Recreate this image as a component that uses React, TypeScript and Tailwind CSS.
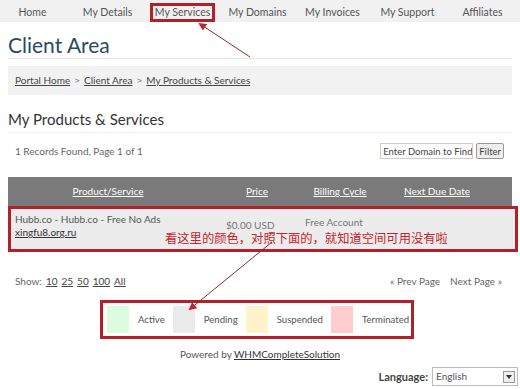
import React from 'react';

const navItems = ['Home', 'My Details', 'My Services', 'My Domains', 'My Invoices', 'My Support', 'Affiliates'];

const legend = [
  { label: 'Active', color: 'bg-[#ddfcdd]' },
  { label: 'Pending', color: 'bg-[#ebebeb]' },
  { label: 'Suspended', color: 'bg-[#fff3cc]' },
  { label: 'Terminated', color: 'bg-[#ffcccf]' },
];

const App: React.FC = () => {
  return (
    <div className="relative w-[520px] h-[389px] overflow-hidden bg-white text-[#555] font-['Lato','Noto_Sans',sans-serif] text-[10px] leading-[15px]">
      {/* top nav */}
      <div className="h-[22px] bg-[#f1f1f1] flex items-end ml-[-5px]">
        {navItems.map((item) => (
          <div key={item} className="w-[76px] flex justify-center text-[10.5px] text-[#555]">
            {item === 'My Services' ? (
              <span className="border-[3px] border-[#b3202a] px-[2px] h-[19px] leading-[13px]">{item}</span>
            ) : (
              <span className="h-[19px] leading-[13px] pt-[3px]">{item}</span>
            )}
          </div>
        ))}
      </div>

      <div className="px-[8px]">
        <h1 className="text-[21px] text-[#2b4a60] leading-[26px] mt-[10px]">Client Area</h1>
        <div className="h-px bg-[#e6e6e6]" />

        <div className="mt-[7px] h-[29px] bg-[#f2f2f2] flex items-center px-[7px] text-[#444] gap-[4px]">
          <span className="underline">Portal Home</span>
          <span className="text-[#777]">&gt;</span>
          <span className="underline">Client Area</span>
          <span className="text-[#777]">&gt;</span>
          <span className="underline">My Products &amp; Services</span>
        </div>

        <h2 className="text-[15px] text-[#333] mt-[14px] leading-[20px]">My Products &amp; Services</h2>
        <div className="h-px bg-[#f2f2f2] mt-[3px]" />

        <div className="flex items-center justify-between mt-[10px] h-[16px] pl-[7px] pr-[8px]">
          <span className="text-[#666]">1 Records Found, Page 1 of 1</span>
          <div className="flex items-center gap-[3px]">
            <div className="w-[93px] h-[16px] border border-[#ccc] text-[#444] text-[9.5px] whitespace-nowrap overflow-hidden flex items-center px-[2px]">Enter Domain to Find</div>
            <div className="h-[16px] border border-[#999] bg-[#eee] text-[#444] text-[9.5px] flex items-center px-[2px] rounded-[2px]">Filter</div>
          </div>
        </div>

        {/* table */}
        <div className="mt-[18px] h-[29px] bg-[#7a7a7a] flex items-center text-white">
          <div className="w-[200px] text-center underline">Product/Service</div>
          <div className="w-[98px] text-center underline">Price</div>
          <div className="w-[68px] text-center underline">Billing Cycle</div>
          <div className="w-[126px] text-center underline">Next Due Date</div>
        </div>
        <div className="relative h-[46px] bg-[#ececec] border-[3px] border-[#b3202a] mr-[-6px] flex">
          <div className="w-[215px] pl-[4px] pt-[4px] leading-[13px] text-[#555]">
            <div>Hubb.co - Hubb.co - Free No Ads</div>
            <div className="underline text-[#333]">xingfu8.org.ru</div>
          </div>
          <div className="pt-[10px] w-[79px] text-[#777] leading-[13px]">$0.00 USD</div>
          <div className="pt-[7px] text-[#777] leading-[13px]">Free Account</div>
          <div className="absolute left-[154px] top-[21px] text-[12.3px] text-[#c8232c] font-['Noto_Sans_CJK_SC',sans-serif] leading-[16px] whitespace-nowrap">
            看这里的颜色，对照下面的，就知道空间可用没有啦
          </div>
        </div>

        <div className="flex justify-between items-center mt-[22px] pl-[7px] pr-[10px] text-[#666]">
          <div className="flex gap-[4px]">
            <span>Show:</span>
            <span className="underline text-[#444]">10</span>
            <span className="underline text-[#444]">25</span>
            <span className="underline text-[#444]">50</span>
            <span className="underline text-[#444]">100</span>
            <span className="underline text-[#444]">All</span>
          </div>
          <div className="flex gap-[10px]">
            <span>« Prev Page</span>
            <span>Next Page »</span>
          </div>
        </div>

        <div className="flex mt-[11px] ml-[92px]">
          <div className="flex items-center gap-[8px] border-[3px] border-[#b3202a] pl-[4px] pr-[2px] py-[3px]">
            {legend.map((l) => (
              <div key={l.label} className="flex items-center gap-[9px]">
                <div className={`w-[22px] h-[27px] ${l.color}`} />
                <span className="text-[#555] text-[9.6px]">{l.label}</span>
              </div>
            ))}
          </div>
        </div>

        <div className="text-center mt-[8px] text-[#555]">
          Powered by <span className="underline text-[#333]">WHMCompleteSolution</span>
        </div>

        <div className="flex justify-end items-center gap-[4px] mt-[5px] mr-[-6px]">
          <span className="font-bold text-[#444] text-[11px]">Language:</span>
          <div className="w-[86px] h-[19px] border border-[#bbb] flex items-center justify-between pl-[3px] pr-[2px] text-[#555]">
            <span>English</span>
            <div className="w-[12px] h-[12px] border border-[#999] bg-[#eee] flex items-center justify-center">
              <div className="w-0 h-0 border-l-[3px] border-r-[3px] border-t-[4px] border-l-transparent border-r-transparent border-t-[#333]" />
            </div>
          </div>
        </div>
      </div>

      {/* annotation arrows */}
      <svg className="absolute left-0 top-0 pointer-events-none" width="520" height="389">
        <defs>
          <marker id="ah" markerWidth="8" markerHeight="8" refX="6" refY="4" orient="auto">
            <path d="M0,0 L8,4 L0,8 Z" fill="#c8232c" />
          </marker>
        </defs>
        <line x1="250" y1="57" x2="200" y2="24" stroke="#8a2a30" strokeWidth="1" markerEnd="url(#ah)" />
        <line x1="272" y1="242" x2="190" y2="309" stroke="#8a2a30" strokeWidth="1" markerEnd="url(#ah)" />
      </svg>
    </div>
  );
};

export default App;
